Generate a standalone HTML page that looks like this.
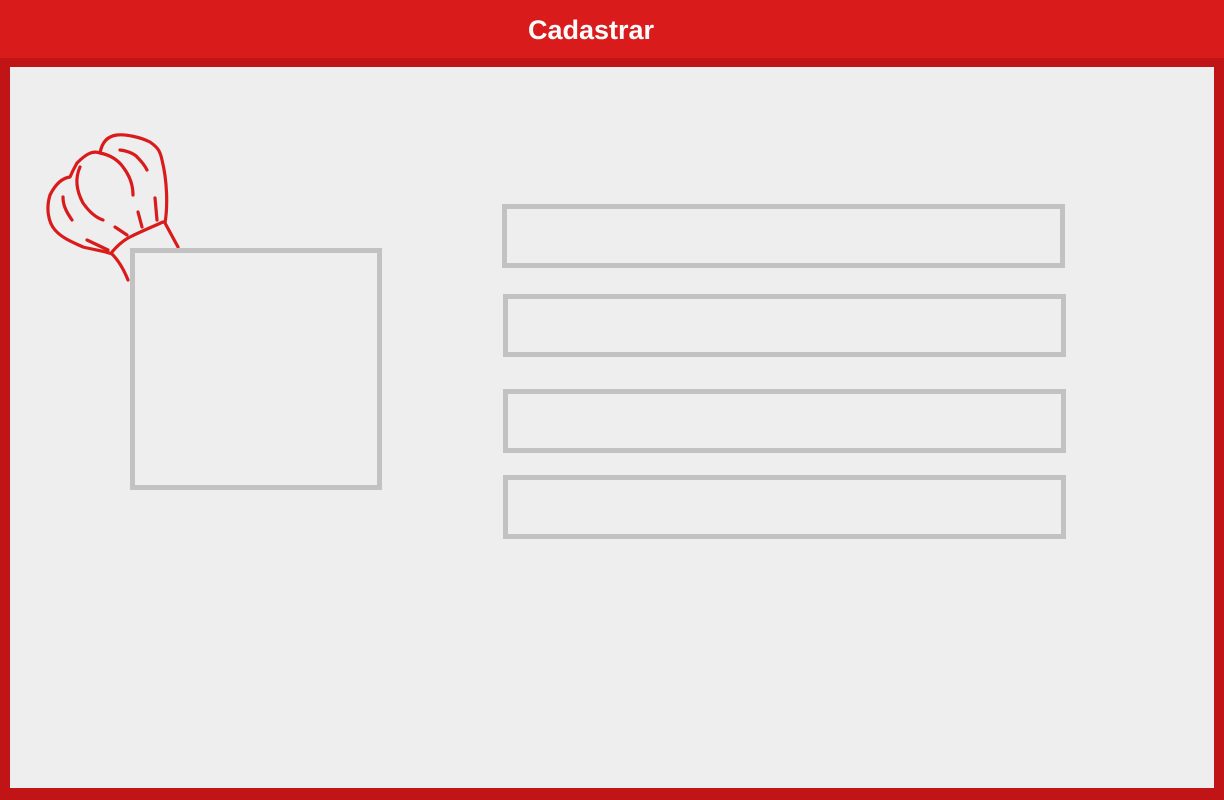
<!DOCTYPE html>
<html><head><meta charset="utf-8"><style>
html,body{margin:0;padding:0;width:1224px;height:800px;overflow:hidden;background:#c01416;font-family:"Liberation Sans",sans-serif}
#hdr{position:absolute;left:0;top:0;width:1182px;height:58px;background:#d91b1c;color:#fff;text-align:center;line-height:60px;font-size:27px;font-weight:bold;padding-right:42px}
#main{position:absolute;left:10px;top:67px;width:1204px;height:721px;background:#eeeeee}
.b{position:absolute;box-sizing:border-box;border:5px solid #c2c2c2}
</style></head><body>
<div id="hdr">Cadastrar</div>
<div id="main"></div>
<svg style="position:absolute;left:0;top:0" width="1224" height="800" fill="none" stroke="#d91b1c" stroke-width="3.2" stroke-linecap="round" stroke-linejoin="round">
<path d="M178,247 L165,223 C168,205 167,180 162,160 C160,150 157,147 150,142 C140,137 125,134 117,135 C108,136 102,142 100,153 C92,150 85,155 77,163 C73,170 70,177 70,177 C62,178 55,185 50,195 C46,208 48,222 55,230 C62,238 72,242 83,247 C95,250 105,251 112,254 C118,260 124,270 128,280"/>
<path d="M112,252 C118,245 124,240 130,237 C142,231 152,227 163,222"/>
<path d="M80,167 C75,178 76,190 83,203 C90,213 97,218 103,220"/>
<path d="M100,153 C110,155 118,160 123,167 C130,176 133,186 133,195"/>
<path d="M120,150 C128,151 135,154 138,158 C142,162 145,166 147,170"/>
<path d="M63,197 C63,204 65,210 72,220"/>
<path d="M155,198 L157,220"/>
<path d="M138,212 L142,227"/>
<path d="M115,227 L127,235"/>
<path d="M87,240 L108,250"/>
</svg>
<div class="b" style="left:130px;top:248px;width:252px;height:242px"></div>
<div class="b" style="left:502px;top:204px;width:563px;height:64px"></div>
<div class="b" style="left:503px;top:294px;width:563px;height:63px"></div>
<div class="b" style="left:503px;top:389px;width:563px;height:64px"></div>
<div class="b" style="left:503px;top:475px;width:563px;height:64px"></div>
</body></html>
